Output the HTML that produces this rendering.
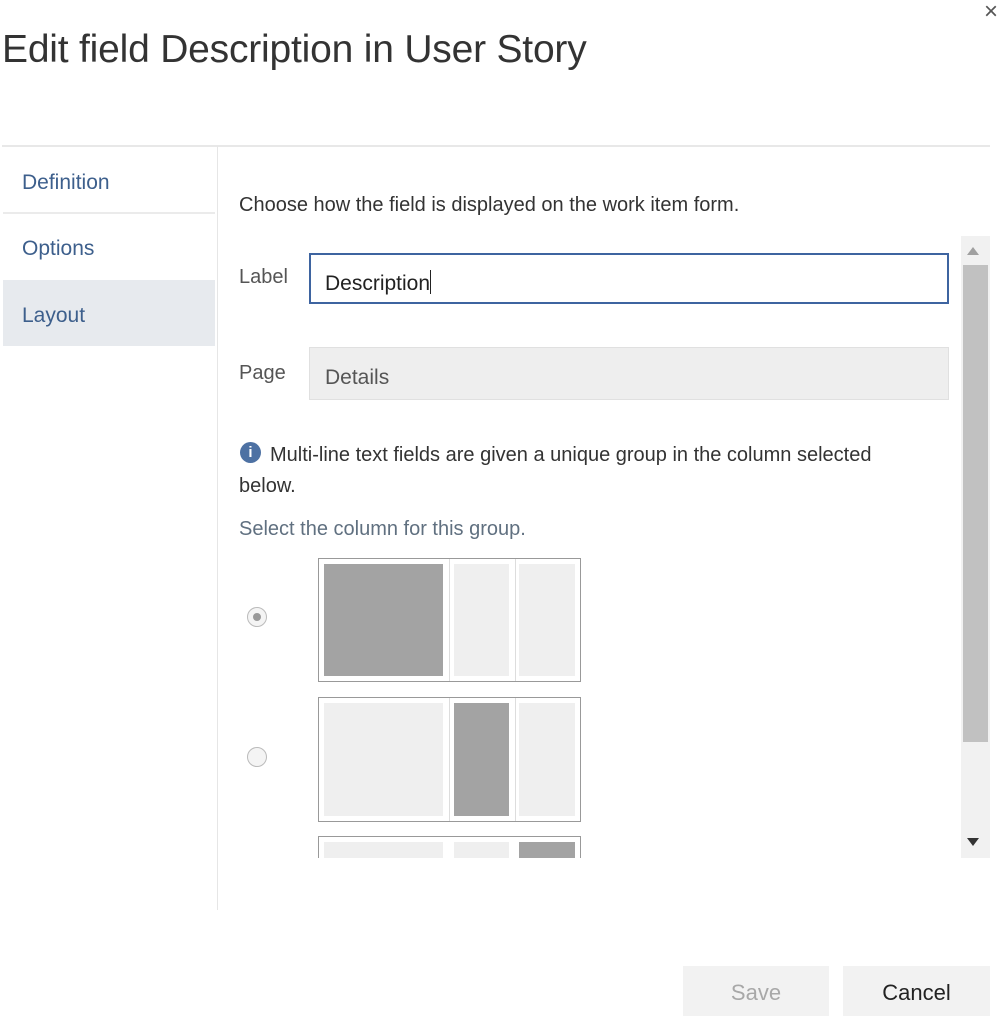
<!DOCTYPE html>
<html><head><style>
body{margin:0;width:1000px;height:1021px;background:#fff;font-family:"Liberation Sans",sans-serif;position:relative;overflow:hidden}
.a{position:absolute}
.nav{color:#3d5f8c;font-size:21px;left:22px}
.box{position:absolute;left:318px;width:261px;border:1px solid #999;background:#fff}
.c{position:absolute;top:5px;bottom:5px;background:#efefef}
.d{background:#a3a3a3}
.radio{position:absolute;left:247px;width:18px;height:18px;border:1px solid #bbb;border-radius:50%;background:#f4f4f4}
</style></head><body>
<div class="a" style="left:984px;top:-2px;font-size:24px;color:#555;font-weight:300">×</div>
<div class="a" style="left:2px;top:28px;font-size:39px;color:#333;letter-spacing:-0.2px">Edit field Description in User Story</div>
<div class="a" style="left:2px;top:145px;width:988px;height:2px;background:#e8e8e8"></div>
<div class="a" style="left:217px;top:146px;width:1px;height:764px;background:#e6e6e6"></div>
<div class="a nav" style="top:171px">Definition</div>
<div class="a" style="left:3px;top:212px;width:212px;height:2px;background:#ebebeb"></div>
<div class="a nav" style="top:237px">Options</div>
<div class="a" style="left:3px;top:280px;width:212px;height:66px;background:#e7eaee"></div>
<div class="a nav" style="top:304px">Layout</div>
<div class="a" style="left:239px;top:194px;font-size:20px;color:#333">Choose how the field is displayed on the work item form.</div>
<div class="a" style="left:239px;top:266px;font-size:20px;color:#555">Label</div>
<div class="a" style="left:309px;top:253px;width:636px;height:47px;border:2px solid #3e64a0"></div>
<div class="a" style="left:325px;top:270px;font-size:21px;color:#222">Description<span style="display:inline-block;width:1px;height:24px;background:#222;vertical-align:-4px"></span></div>
<div class="a" style="left:239px;top:362px;font-size:20px;color:#555">Page</div>
<div class="a" style="left:309px;top:347px;width:638px;height:51px;background:#eeeeee;border:1px solid #e0e0e0"></div>
<div class="a" style="left:325px;top:366px;font-size:21px;color:#555">Details</div>
<div class="a" style="left:240px;top:442px;width:21px;height:21px;border-radius:50%;background:#4d71a3;color:#fff;font-size:15px;font-weight:bold;text-align:center;line-height:21px">i</div>
<div class="a" style="left:239px;top:440px;font-size:20px;color:#333;line-height:31px;width:650px;text-indent:31px">Multi-line text fields are given a unique group in the column selected below.</div>
<div class="a" style="left:239px;top:518px;font-size:20px;color:#607080">Select the column for this group.</div>
<div class="radio" style="top:607px"><div style="position:absolute;left:5px;top:5px;width:8px;height:8px;border-radius:50%;background:#999"></div></div>
<div class="radio" style="top:747px"></div>
<div class="box" style="top:558px;height:122px"><div class="c d" style="left:5px;width:119px"></div><div style="position:absolute;left:130px;top:0;bottom:0;width:1px;background:#ddd"></div><div class="c" style="left:135px;width:55px"></div><div style="position:absolute;left:196px;top:0;bottom:0;width:1px;background:#ddd"></div><div class="c" style="left:200px;width:56px"></div></div>
<div class="box" style="top:697px;height:123px"><div class="c" style="left:5px;width:119px"></div><div style="position:absolute;left:130px;top:0;bottom:0;width:1px;background:#ddd"></div><div class="c d" style="left:135px;width:55px"></div><div style="position:absolute;left:196px;top:0;bottom:0;width:1px;background:#ddd"></div><div class="c" style="left:200px;width:56px"></div></div>
<div class="a" style="left:318px;top:836px;width:263px;height:22px;overflow:hidden"><div class="box" style="left:0;top:0;height:60px"><div class="c" style="left:5px;width:119px"></div><div class="c" style="left:135px;width:55px"></div><div class="c d" style="left:200px;width:56px"></div></div></div>
<div class="a" style="left:961px;top:236px;width:29px;height:622px;background:#f1f1f1"></div>
<div class="a" style="left:963px;top:265px;width:25px;height:477px;background:#c1c1c1"></div>
<div class="a" style="left:967px;top:247px;width:0;height:0;border-left:6px solid transparent;border-right:6px solid transparent;border-bottom:8px solid #a0a0a0"></div>
<div class="a" style="left:967px;top:838px;width:0;height:0;border-left:6px solid transparent;border-right:6px solid transparent;border-top:8px solid #333"></div>
<div class="a" style="left:683px;top:966px;width:146px;height:50px;background:#f2f2f2;color:#a8a8a8;font-size:22px;text-align:center;line-height:54px">Save</div>
<div class="a" style="left:843px;top:966px;width:147px;height:50px;background:#f2f2f2;color:#222;font-size:22px;text-align:center;line-height:54px">Cancel</div>
</body></html>
